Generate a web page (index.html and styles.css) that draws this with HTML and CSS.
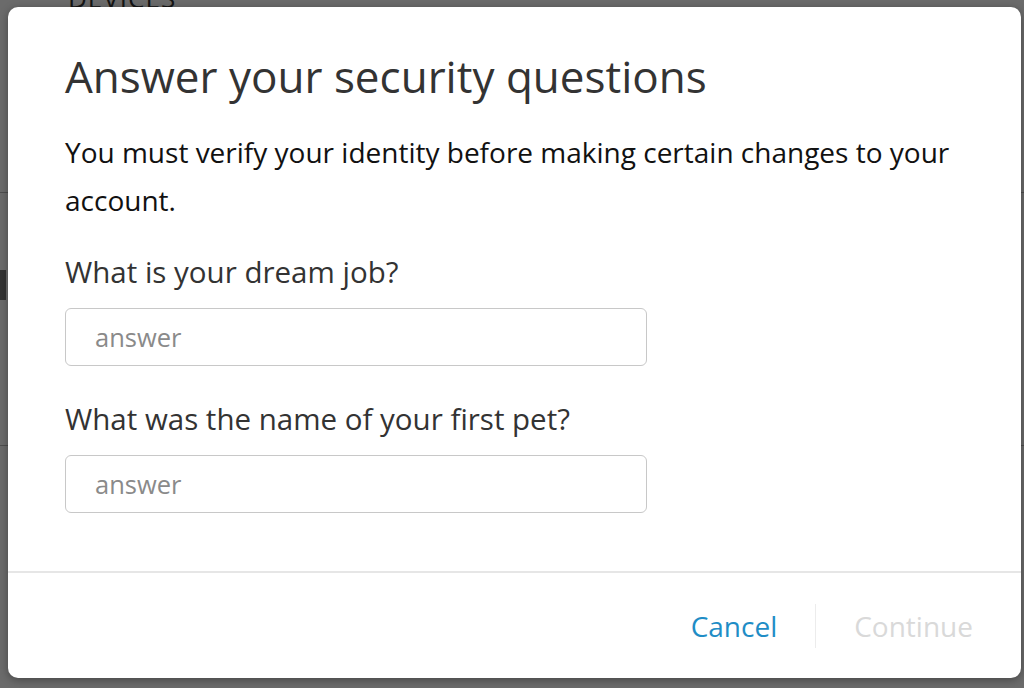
FILE: index.html
```html
<!DOCTYPE html>
<html lang="en">
<head>
<meta charset="utf-8">
<title>Answer your security questions</title>
<link rel="stylesheet" href="styles.css">
</head>
<body>
<div class="page">
  <h2 class="section-title top">DEVICES</h2>
  <div class="rule rule-a"></div>
  <div class="marker"></div>
  <div class="rule rule-b"></div>
  <h2 class="section-title bottom">EMAIL FROM APPLE</h2>
</div>
<div class="overlay"></div>
<div class="modal">
  <div class="modal-body">
    <h1 class="title">Answer your security questions</h1>
    <p class="intro">You must verify your identity before making certain changes to your account.</p>
    <label class="question q-first">What is your dream job?</label>
    <input class="answer" type="text" placeholder="answer">
    <label class="question">What was the name of your first pet?</label>
    <input class="answer" type="text" placeholder="answer">
  </div>
  <div class="modal-footer">
    <button class="btn btn-cancel">Cancel</button>
    <span class="sep"></span>
    <button class="btn btn-continue" disabled>Continue</button>
  </div>
</div>
</body>
</html>
```

FILE: styles.css
```css
* { box-sizing: border-box; }
html, body { margin: 0; height: 100%; }
body {
  background: #ffffff;
  font-family: "Open Sans", "Liberation Sans", sans-serif;
  overflow: hidden;
  position: relative;
}
.page {
  padding-left: 68px;
  display: flex;
  flex-direction: column;
  height: 688px;
}
.section-title {
  margin: 0;
  font-size: 26px;
  font-weight: 400;
  letter-spacing: 1px;
  color: #333;
}
.section-title.top { margin-top: -20px; }
.rule { height: 1px; background: #bbb; margin-left: -68px; }
.rule-a { margin-top: 176px; }
.marker { width: 6px; height: 30px; background: #777; margin-left: -68px; margin-top: 77px; }
.rule-b { margin-top: 145px; }
.section-title.bottom { margin-top: auto; margin-bottom: -26px; }

.overlay {
  position: absolute;
  inset: 0;
  background: rgba(0, 0, 0, 0.58);
}
.modal {
  position: absolute;
  left: 8px;
  top: 7px;
  width: 1013px;
  height: 671px;
  background: #fff;
  border-radius: 10px;
  box-shadow: 0 2px 8px rgba(0,0,0,0.35);
  display: flex;
  flex-direction: column;
}
.modal-body {
  flex: 1;
  padding: 41px 57px 0 57px;
  display: flex;
  flex-direction: column;
  align-items: flex-start;
}
.title {
  margin: 0;
  font-size: 44px;
  font-weight: 400;
  color: #333;
  line-height: 56px;
}
.intro {
  margin: 24px 0 0 0;
  font-size: 28px;
  line-height: 48px;
  color: #111;
}
.question {
  margin-top: 33px;
  font-size: 29.5px;
  line-height: 40px;
  color: #333;
}
.question.q-first { margin-top: 28px; }
.answer {
  margin-top: 16px;
  width: 582px;
  height: 58px;
  border: 1px solid #c8c8c8;
  border-radius: 6px;
  padding: 0 29px;
  font-family: inherit;
  font-size: 25.5px;
  color: #333;
  outline: none;
}
.answer::placeholder { color: #8a8a8a; }
.modal-footer {
  height: 107px;
  border-top: 2px solid #e6e6e6;
  display: flex;
  align-items: center;
  justify-content: flex-end;
  padding-right: 48px;
}
.btn {
  background: none;
  border: none;
  font-family: inherit;
  font-size: 28px;
  padding: 0 38px;
  cursor: pointer;
}
.btn-cancel { color: #1f8dc6; }
.btn-continue { color: #d9d9d9; cursor: default; padding-right: 0; }
.sep { width: 1px; height: 44px; background: #ececec; }
```
